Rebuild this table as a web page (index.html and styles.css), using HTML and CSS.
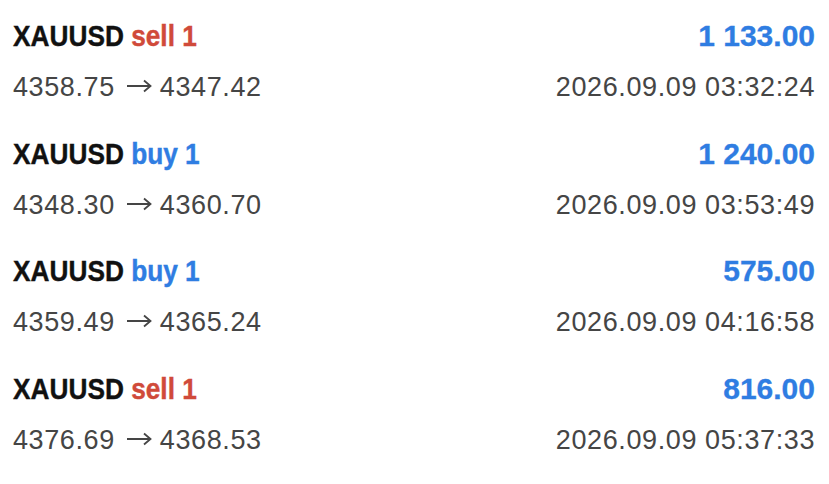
FILE: index.html
```html
<!DOCTYPE html>
<html lang="en">
<head>
    <meta charset="UTF-8">
    <meta name="viewport" content="width=device-width, initial-scale=1.0">
    <title>Deals</title>
    <link rel="stylesheet" href="styles.css">
</head>
<body>

<div class="deals">
    <div class="deal">
        <div class="line">
            <span class="symbol">XAUUSD <span class="sell">sell 1</span></span>
            <span class="profit">1 133.00</span>
        </div>
        <div class="line sub">
            <span>4358.75<svg class="arrow" viewBox="0 0 26 14"><path d="M1 7H24.5M18 1.5L24.5 7L18 12.5"/></svg>4347.42</span>
            <span>2026.09.09 03:32:24</span>
        </div>
    </div>

    <div class="deal">
        <div class="line">
            <span class="symbol">XAUUSD <span class="buy">buy 1</span></span>
            <span class="profit">1 240.00</span>
        </div>
        <div class="line sub">
            <span>4348.30<svg class="arrow" viewBox="0 0 26 14"><path d="M1 7H24.5M18 1.5L24.5 7L18 12.5"/></svg>4360.70</span>
            <span>2026.09.09 03:53:49</span>
        </div>
    </div>

    <div class="deal">
        <div class="line">
            <span class="symbol">XAUUSD <span class="buy">buy 1</span></span>
            <span class="profit">575.00</span>
        </div>
        <div class="line sub">
            <span>4359.49<svg class="arrow" viewBox="0 0 26 14"><path d="M1 7H24.5M18 1.5L24.5 7L18 12.5"/></svg>4365.24</span>
            <span>2026.09.09 04:16:58</span>
        </div>
    </div>

    <div class="deal">
        <div class="line">
            <span class="symbol">XAUUSD <span class="sell">sell 1</span></span>
            <span class="profit">816.00</span>
        </div>
        <div class="line sub">
            <span>4376.69<svg class="arrow" viewBox="0 0 26 14"><path d="M1 7H24.5M18 1.5L24.5 7L18 12.5"/></svg>4368.53</span>
            <span>2026.09.09 05:37:33</span>
        </div>
    </div>
</div>

</body>
</html>
```

FILE: styles.css
```css
body {
    margin: 0;
    background-color: #ffffff;
    font-family: "Liberation Sans", Arial, sans-serif;
}
.deals {
    padding: 0 14px 0 13px;
}
.deal {
    display: flex;
    flex-direction: column;
    gap: 18px;
    height: 117.7px;
    padding-top: 19px;
    box-sizing: border-box;
}
.line {
    display: flex;
    justify-content: space-between;
    align-items: baseline;
    height: 34px;
    line-height: 34px;
}
.symbol {
    display: inline-block;
    font-weight: bold;
    font-size: 30px;
    color: #111111;
    transform: scaleX(0.875);
    transform-origin: left center;
    -webkit-text-stroke: 0.4px #111111;
}
.sell {
    color: #d04a3a;
    -webkit-text-stroke-color: #d04a3a;
}
.buy {
    color: #2f7de2;
    -webkit-text-stroke-color: #2f7de2;
}
.profit {
    font-weight: bold;
    font-size: 30px;
    color: #2f7de2;
    -webkit-text-stroke: 0.3px #2f7de2;
}
.sub {
    height: 32px;
    line-height: 32px;
    font-size: 27px;
    letter-spacing: 0.6px;
    color: #454545;
}
.arrow {
    width: 26px;
    height: 14px;
    margin: 0 8px 0 11px;
    vertical-align: 3px;
    fill: none;
    stroke: #454545;
    stroke-width: 1.8;
}
```
